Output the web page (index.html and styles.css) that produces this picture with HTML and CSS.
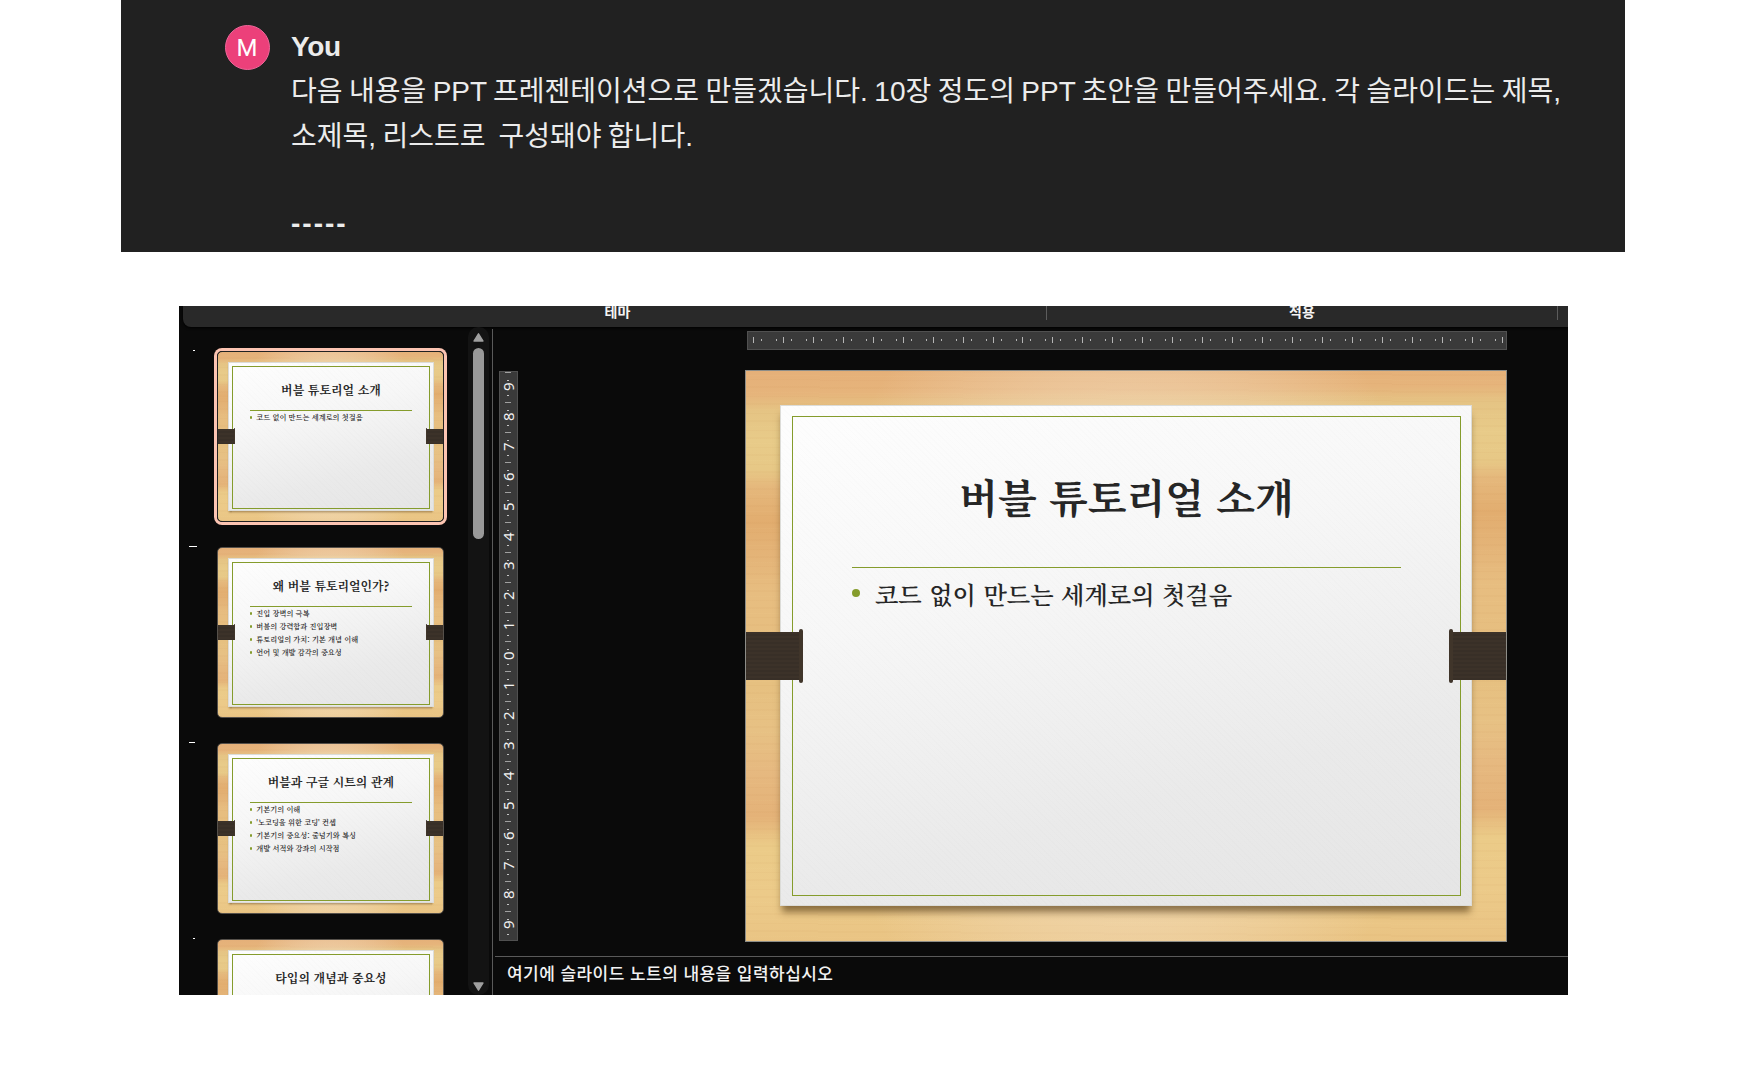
FILE: index.html
```html
<!DOCTYPE html>
<html lang="ko">
<head>
<meta charset="utf-8">
<title>PPT 초안</title>
<link rel="stylesheet" href="styles.css">
</head>
<body>
<section class="chat">
  <div class="avatar">M</div>
  <div class="message">
    <div class="author">You</div>
    <p class="line first">다음 내용을 PPT 프레젠테이션으로 만들겠습니다. 10장 정도의 PPT 초안을 만들어주세요. 각 슬라이드는 제목,</p>
    <p class="line second">소제목, 리스트로&nbsp; 구성돼야 합니다.</p>
    <p class="line dashes">-----</p>
  </div>
</section>

<section class="editor">
  <header class="ribbon">
    <div class="group themes"><span>테마</span></div>
    <div class="group apply"><span>적용</span></div>
  </header>
  <div class="workspace">
    <aside class="thumbs">
      <div class="thumb-row"><i class="mark dot"></i>
        <article class="slide selected"><div class="paper"><div class="frame"><h2>버블 튜토리얼 소개</h2><ul><li>코드 없이 만드는 세계로의 첫걸음</li></ul></div></div><b class="strap left"></b><b class="strap right"></b></article>
      </div>
      <div class="thumb-row"><i class="mark"></i>
        <article class="slide"><div class="paper"><div class="frame"><h2>왜 버블 튜토리얼인가?</h2><ul><li>진입 장벽의 극복</li><li>버블의 강력함과 진입장벽</li><li>튜토리얼의 가치: 기본 개념 이해</li><li>언어 및 개발 감각의 중요성</li></ul></div></div><b class="strap left"></b><b class="strap right"></b></article>
      </div>
      <div class="thumb-row"><i class="mark short"></i>
        <article class="slide"><div class="paper"><div class="frame"><h2>버블과 구글 시트의 관계</h2><ul><li>기본기의 이해</li><li>'노코딩을 위한 코딩' 컨셉</li><li>기본기의 중요성: 줄넘기와 복싱</li><li>개발 서적와 강좌의 시작점</li></ul></div></div><b class="strap left"></b><b class="strap right"></b></article>
      </div>
      <div class="thumb-row"><i class="mark dot"></i>
        <article class="slide"><div class="paper"><div class="frame"><h2>타입의 개념과 중요성</h2><ul></ul></div></div><b class="strap left"></b><b class="strap right"></b></article>
      </div>
    </aside>
    <div class="scrollbar">
      <svg width="11" height="9" viewBox="0 0 11 9"><path d="M5.5 .8 10 8H1Z" fill="#a0a0a0" stroke="#a0a0a0" stroke-width="1.4" stroke-linejoin="round"/></svg>
      <div class="handle"></div>
      <svg class="down" width="11" height="9" viewBox="0 0 11 9"><path d="M5.5 8.2 10 1H1Z" fill="#a0a0a0" stroke="#a0a0a0" stroke-width="1.4" stroke-linejoin="round"/></svg>
    </div>
    <main class="stage">
      <div class="canvas">
        <div class="ruler-h"></div>
        <div class="ruler-v"><span>9</span><span>8</span><span>7</span><span>6</span><span>5</span><span>4</span><span>3</span><span>2</span><span>1</span><span>0</span><span>1</span><span>2</span><span>3</span><span>4</span><span>5</span><span>6</span><span>7</span><span>8</span><span>9</span></div>
        <article class="slide large"><div class="paper"><div class="frame"><h2>버블 튜토리얼 소개</h2><ul><li>코드 없이 만드는 세계로의 첫걸음</li></ul></div></div><b class="strap left"></b><b class="strap right"></b></article>
      </div>
      <footer class="notes"><span>여기에 슬라이드 노트의 내용을 입력하십시오</span></footer>
    </main>
  </div>
</section>
</body>
</html>
```
FILE: styles.css
```css
* { box-sizing: border-box; }
body {
  margin: 0;
  height: 1080px;
  overflow: hidden;
  background: #fff;
  font-family: "Liberation Sans", "Noto Sans CJK KR", sans-serif;
}
h2, p, ul { margin: 0; padding: 0; }

/* chat message */
.chat {
  display: flex;
  gap: 21.5px;
  width: 1504px;
  height: 252px;
  margin-left: 121px;
  padding: 25px 0 0 103.5px;
  background: #212121;
  color: #ececec;
}
.avatar {
  width: 45px;
  height: 45px;
  border: 1px solid #f0669a;
  border-radius: 50%;
  background: #ec407a;
  color: #fff;
  font: 24px/44px Roboto, sans-serif;
  text-align: center;
}
.author { font-size: 28px; font-weight: 700; line-height: 43px; height: 45px; letter-spacing: -.4px; }
.line { font-size: 28px; line-height: 44.6px; white-space: nowrap; word-spacing: -1.35px; }
.dashes { padding-top: 43px; font-weight: 700; letter-spacing: 2px; }

/* presentation editor */
.editor {
  width: 1389px;
  height: 689px;
  margin: 54px 0 0 179px;
  background: #0a0a0a;
  overflow: hidden;
}
.ribbon {
  display: flex;
  height: 21px;
  margin-left: 4px;
  border-radius: 0 0 0 8px;
  background: #292929;
  box-shadow: 0 1px 3px #000;
  color: #f4f4f4;
  font-size: 14px;
  font-weight: 600;
}
.group { height: 14px; border-right: 1px solid #5c5c5c; text-align: center; overflow: hidden; }
.group span { display: block; line-height: 20px; margin-top: -4px; }
.themes { width: 864px; padding-left: 6px; }
.apply { width: 511px; }
.workspace { display: flex; height: 668px; }

.thumbs { width: 289px; padding-top: 24px; overflow: hidden; }
.thumb-row { display: flex; height: 171px; margin-bottom: 25px; }
.mark { width: 8px; height: 1px; margin: -1px 20px 0 10px; background: #fff; flex: none; }
.mark.short { width: 6px; margin-right: 22px; }
.mark.dot { width: 2px; margin: -1px 22px 0 14px; }

.scrollbar {
  display: flex;
  flex-direction: column;
  align-items: center;
  width: 21px;
  padding: 6px 0 4px;
  border-radius: 10px;
  background: #131313;
}
.handle { width: 11px; height: 191px; margin-top: 6px; border-radius: 6px; background: #999; }
.down { margin-top: auto; }

.stage { width: 1076px; margin: 2px 0 0 3px; border-left: 1px solid #5a5a5a; }
.canvas {
  display: grid;
  grid-template: 19px 572px / 19px 762px;
  gap: 20px 227px;
  height: 627px;
  padding: 2px 0 0 6px;
}
.ruler-h {
  grid-column: 2;
  margin-left: 2px;
  border: 1px solid #505050;
  background:
    repeating-linear-gradient(90deg, #b5b5b5 0 1px, transparent 1px 29.94px) 5px 5px / 100% 6px no-repeat,
    repeating-linear-gradient(90deg, transparent 0 8px, #b5b5b5 8px 9px, transparent 9px 23px, #b5b5b5 23px 24px, transparent 24px 29.94px) 5px 7px / 100% 2px no-repeat,
    #3a3a3a;
}
.ruler-v {
  height: 570px;
  margin-top: 1px;
  border: 1px solid #505050;
  background:
    repeating-linear-gradient(#a0a0a0 0 1px, transparent 1px 29.94px) 5px 0 / 6px 100% no-repeat,
    repeating-linear-gradient(transparent 0 8px, #c5c5c5 8px 9px, transparent 9px 23px, #c5c5c5 23px 24px, transparent 24px 29.94px) 7px 0 / 2px 100% no-repeat,
    #3a3a3a;
}
.ruler-v span {
  display: block;
  width: 17px;
  height: 29.92px;
  color: #f2f2f2;
  font: 15px/17px "Noto Sans", sans-serif;
  text-align: center;
  writing-mode: vertical-rl;
  transform: rotate(180deg);
}
.notes { margin-left: 2px; padding: 8px 0 0 12px; border-top: 1px solid #5a5a5a; color: #f2f2f2; }
.notes span { font-size: 17px; font-weight: 500; line-height: 20px; letter-spacing: .45px; }

/* slide: every inner length is a multiple of --u */
.slide {
  --u: .298px;
  position: relative;
  flex: none;
  width: 227px;
  height: 171px;
  padding: calc(var(--u) * 34) calc(var(--u) * 34);
  border: 1px solid #55504a;
  border-radius: 5px;
  overflow: hidden;
  background:
    radial-gradient(ellipse 42% 75% at 50% 50%, rgba(245,230,215,.7), rgba(245,225,200,.45) 60%, transparent),
    repeating-linear-gradient(.4deg, rgba(170,100,40,.03) 0 1px, transparent 1px 4px, rgba(255,240,180,.03) 4px 5px, transparent 5px 9px, rgba(170,100,40,.03) 9px 11px, transparent 11px 17px),
    linear-gradient(179.3deg, #e5b079 0, #e6b47b 4%, #e5c484 7%, #e8cb89 12%, #e7c886 17%, #e5b87c 20%, #e2ad6f 26%, #e4b478 32%, #e7bd80 38%, #e6c080 54%, #e7c184 62%, #e6b980 69%, #e4b278 77%, #ebcb88 82%, #ecca89 91%, #e9c383 100%);
}
.slide.selected { box-shadow: 0 0 0 3px #fcc4b2; border-color: #222; }
.slide.large { --u: 1px; width: 762px; height: 572px; border-color: #8d8d88; border-radius: 0; }
.paper {
  width: calc(var(--u) * 692);
  height: calc(var(--u) * 501);
  padding: calc(var(--u) * 10) calc(var(--u) * 10) 0 calc(var(--u) * 11);
  border: calc(var(--u) * 1) solid #dcdcd8;
  background:
    repeating-linear-gradient(45deg, rgba(0,0,0,.008) 0 1px, transparent 1px 4px),
    linear-gradient(165deg, #fdfdfd 5%, #f7f7f7 35%, #eaeaea 72%, #e5e5e5);
  box-shadow: 0 calc(var(--u) * 8) calc(var(--u) * 7) calc(var(--u) * -2) rgba(75,50,15,.6);
}
.frame {
  height: calc(var(--u) * 480);
  padding: 0 calc(var(--u) * 59);
  border: 1px solid #859c2c;
  color: #262626;
  font-family: "Noto Serif CJK KR", "Noto Serif KR", "Noto Sans CJK KR", serif;
}
.slide:not(.large) .frame { padding-left: calc(var(--u) * 56); }
.frame h2 {
  height: calc(var(--u) * 151);
  padding-top: calc(var(--u) * 49);
  border-bottom: 1px solid #859c2c;
  font-size: calc(var(--u) * 40.1);
  font-weight: 700;
  line-height: calc(var(--u) * 60);
  text-align: center;
  white-space: nowrap;
}
.slide:not(.large) h2 { padding-top: calc(var(--u) * 46); height: calc(var(--u) * 149); }
.frame ul { padding-top: calc(var(--u) * 3); list-style: none; }
.slide:not(.large) ul { padding-top: 0; margin-top: calc(var(--u) * -2); }
.slide:not(.large) li { height: 13px; gap: calc(var(--u) * 13); }
.frame li {
  display: flex;
  align-items: center;
  gap: calc(var(--u) * 15);
  height: calc(var(--u) * 44);
  font-size: calc(var(--u) * 24.2);
  font-weight: 600;
  white-space: nowrap;
}
.frame li::before {
  content: "";
  width: calc(var(--u) * 8);
  height: calc(var(--u) * 8);
  border-radius: 50%;
  background: #859c2c;
}
.strap {
  position: absolute;
  top: calc(var(--u) * 261);
  width: calc(var(--u) * 58);
  height: calc(var(--u) * 48);
  background: repeating-linear-gradient(#3c3229 0 2px, #382f27 2px 4px);
}
.slide:not(.large) .strap { top: 77px; width: 18px; height: 15px; }
.strap::after {
  content: "";
  position: absolute;
  top: calc(var(--u) * -3);
  width: calc(var(--u) * 4);
  height: calc(var(--u) * 54);
  border-radius: calc(var(--u) * 2);
  background: #40352a;
}
.left { left: -1px; }
.right { right: -1px; }
.left::after { right: 0; }
.right::after { left: 0; }
```
